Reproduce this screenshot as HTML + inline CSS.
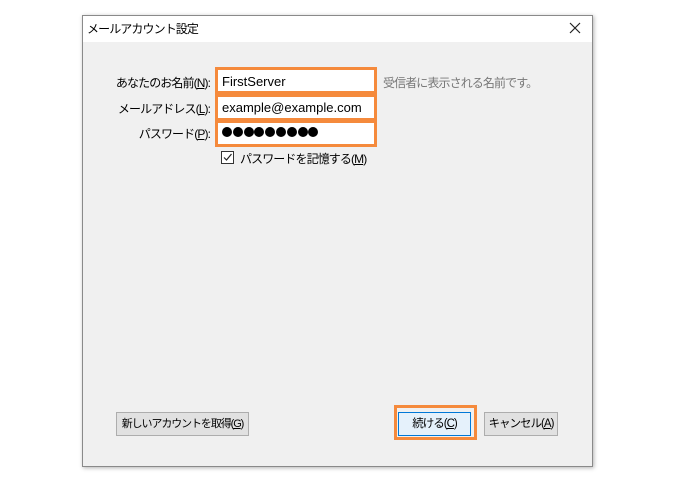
<!DOCTYPE html>
<html><head><meta charset="utf-8"><style>
body{margin:0;width:676px;height:481px;background:#fff;font-family:"Liberation Sans","Noto Sans CJK JP",sans-serif;font-size:12px;color:#000;position:relative;overflow:hidden}
.dlg{position:absolute;left:82px;top:15px;width:509px;height:450px;background:#f0f0f0;border:1px solid #8a8a8a;box-shadow:1px 1px 4px rgba(0,0,0,.3)}
.title{position:absolute;left:0;top:0;width:509px;height:26px;background:#fff}
.t{position:absolute;white-space:nowrap}
.j{letter-spacing:-0.9px}
.lbl{position:absolute;right:466px;white-space:nowrap;text-align:right;letter-spacing:-0.9px}
.ob{position:absolute;border:3px solid #f58a3c;background:#fff}
.btn{position:absolute;height:22px;border:1px solid #adadad;background:#e1e1e1;text-align:center;line-height:22px;font-size:11.5px;white-space:nowrap;letter-spacing:-1px}
u{text-decoration:underline}
.d{display:inline-block;width:10px;height:10px;border-radius:50%;background:#000;margin-right:0.8px}
</style></head><body>
<div class="dlg"><div class="title"></div></div>
<div class="t j" style="left:87px;top:20px">メールアカウント設定</div>
<svg style="position:absolute;left:569px;top:22px" width="12" height="12"><path d="M1 1L11 11M11 1L1 11" stroke="#222" stroke-width="1.2"/></svg>

<div class="lbl" style="top:74px">あなたのお名前(<u>N</u>):</div>
<div class="lbl" style="top:100px">メールアドレス(<u>L</u>):</div>
<div class="lbl" style="top:125px">パスワード(<u>P</u>):</div>

<div class="ob" style="left:215px;top:67px;width:156px;height:21px"></div>
<div class="ob" style="left:215px;top:94px;width:156px;height:21px"></div>
<div class="ob" style="left:215px;top:120px;width:156px;height:21px"></div>
<div class="t" style="left:222px;top:74px;font-size:13px">FirstServer</div>
<div class="t" style="left:222px;top:100px;font-size:13px">example@example.com</div>
<div class="t" style="left:222px;top:127px;line-height:10px"><span class="d"></span><span class="d"></span><span class="d"></span><span class="d"></span><span class="d"></span><span class="d"></span><span class="d"></span><span class="d"></span><span class="d"></span></div>
<div class="t j" style="left:383px;top:74px;color:#777">受信者に表示される名前です。</div>

<div style="position:absolute;left:221px;top:151px;width:11px;height:11px;border:1px solid #333;background:#fff"></div>
<svg style="position:absolute;left:222px;top:152px" width="11" height="11"><path d="M2 5.5L4.5 8L9.5 2" stroke="#222" stroke-width="1.2" fill="none"/></svg>
<div class="t j" style="left:240px;top:150px">パスワードを記憶する(<u>M</u>)</div>

<div class="btn" style="left:116px;top:412px;width:131px;font-size:11px;letter-spacing:-1.1px">新しいアカウントを取得(<u>G</u>)</div>
<div style="position:absolute;left:394px;top:405px;width:77px;height:29px;border:3px solid #f58a3c"></div>
<div class="btn" style="left:398px;top:412px;width:71px;background:#e5f1fb;border-color:#0078d7">続ける(<u>C</u>)</div>
<div class="btn" style="left:484px;top:412px;width:72px">キャンセル(<u>A</u>)</div>
</body></html>
